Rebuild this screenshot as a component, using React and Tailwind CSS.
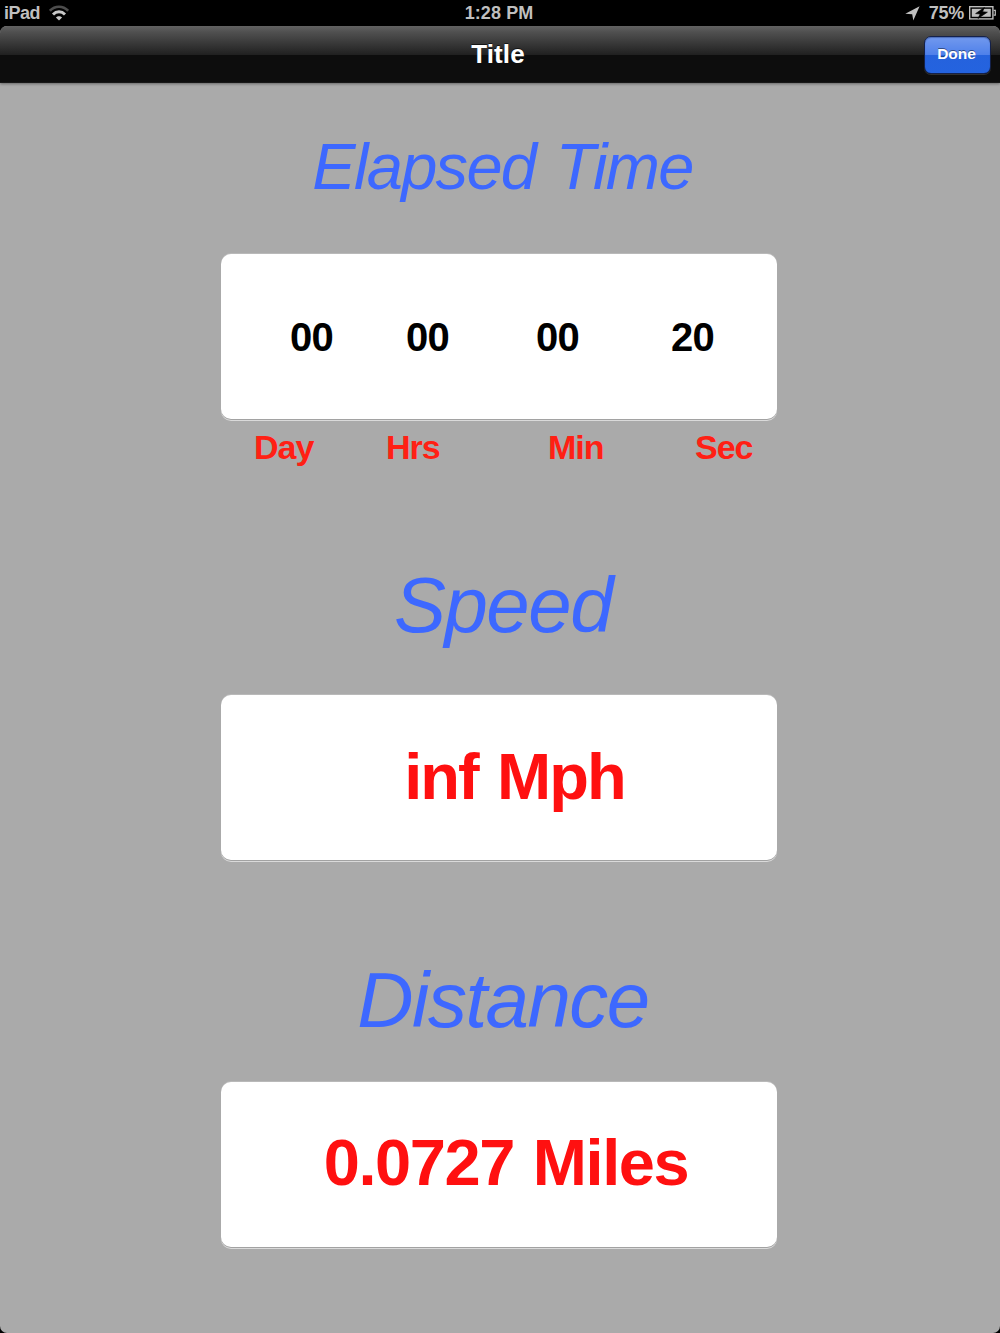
const elapsed = ['00', '00', '00', '20'];
const units = ['Day', 'Hrs', 'Min', 'Sec'];

function WifiIcon() {
  return (
    <svg width="20" height="16" viewBox="0 0 20 16" fill="none">
      <path d="M0.9 5.8C6 0.3 14 0.3 19.1 5.8" stroke="#4c4c4c" strokeWidth="2.6" />
      <path d="M4 9.4C7.4 5.8 12.6 5.8 16 9.4" stroke="#c8c8c8" strokeWidth="2.9" />
      <path d="M10 15.4L6.9 12.6C8.6 10.8 11.4 10.8 13.1 12.6Z" fill="#c8c8c8" />
    </svg>
  );
}

function LocationIcon() {
  return (
    <svg width="15" height="15" viewBox="0 0 15 15">
      <path d="M14.6 0.2L8.3 14.6L7.2 8.2L0.3 7.8Z" fill="#c0c0c0" />
    </svg>
  );
}

function BatteryIcon() {
  return (
    <svg width="28" height="14" viewBox="0 0 28 14">
      <rect x="0.7" y="0.7" width="23.2" height="12.2" fill="none" stroke="#bdbdbd" strokeWidth="1.4" />
      <rect x="2.8" y="2.8" width="19" height="8" fill="#bdbdbd" />
      <path d="M24.6 4.4H26.3V9.2H24.6" fill="none" stroke="#bdbdbd" strokeWidth="1.2" />
      <path d="M15.4 1.6L6.6 7.6L11.2 8L9 12.4L18.4 6.2L13.6 5.7Z" fill="#000" stroke="#000" strokeWidth="0.6" />
    </svg>
  );
}

function StatusBar() {
  return (
    <div className="grid h-[26px] grid-cols-3 items-center text-[18px] font-bold leading-none text-[#bfbfbf]">
      <div className="flex items-center gap-[9px] pl-1">
        <span className="tracking-[-0.5px]">iPad</span>
        <WifiIcon />
      </div>
      <span className="pr-[2px] text-center tracking-[0.1px]">1:28 PM</span>
      <div className="flex items-center justify-end pr-[3px]">
        <LocationIcon />
        <span className="ml-[9px] mr-[5px] tracking-[-0.3px]">75%</span>
        <BatteryIcon />
      </div>
    </div>
  );
}

function NavBar() {
  return (
    <header className="relative z-10 grid h-[57px] grid-cols-3 items-center rounded-t-[7px] bg-[linear-gradient(#626262_0px,#505050_6px,#202020_29px,#0d0d0d_29px,#0d0d0d_56px,#222_57px)] shadow-[0_1px_3px_rgba(0,0,0,0.4)]">
      <span />
      <h1 className="pr-[4px] pb-[2px] text-center text-[26px] font-bold leading-none tracking-[0.1px] text-white [text-shadow:0_-1px_0_rgba(0,0,0,0.6)]">
        Title
      </h1>
      <div className="flex justify-end pr-[9px]">
        <button className="h-[38px] w-[67px] rounded-[7px] border border-[#14214a] bg-[linear-gradient(#7299ee_0px,#4e80ea_18px,#2562dd_18px,#2463df_36px)] pr-[2px] pb-[1px] text-[15.5px] font-bold leading-none text-white shadow-[0_1px_0_rgba(255,255,255,0.15),inset_0_1px_1px_rgba(20,40,100,0.4)] [text-shadow:0_-1px_0_rgba(0,0,0,0.45)]">
          Done
        </button>
      </div>
    </header>
  );
}

function Card({ children }) {
  return (
    <div className="h-[165px] w-[556px] rounded-[10px] bg-white shadow-[0_1px_0_#a2a2a2,0_2px_0_#dadada,0_-1px_0_#b9b9b9]">
      {children}
    </div>
  );
}

export default function App() {
  return (
    <div className="flex h-[1333px] w-[1000px] flex-col overflow-hidden bg-black font-['Liberation_Sans',Arial,sans-serif]">
      <StatusBar />
      <div className="flex flex-1 flex-col rounded-t-[7px] rounded-b-[7px] bg-[#aaa]">
        <NavBar />
        <main className="flex flex-col pl-[221px]">
          <section className="h-[441px] pt-[44px]">
            <h2 className="mb-[47px] h-20 w-[556px] pl-[7px] text-center text-[65px] italic leading-[80px] tracking-[-1.7px] [word-spacing:4px] text-[#3d68ff]">
              Elapsed Time
            </h2>
            <Card>
              <div className="grid h-full grid-cols-[116px_130px_135px_auto] items-center pl-[69px] text-[40px] font-bold tracking-[-0.8px] text-black">
                {elapsed.map((value, i) => (
                  <span key={units[i]}>{value}</span>
                ))}
              </div>
            </Card>
            <div className="mt-[8px] grid grid-cols-[132px_162px_147px_auto] pl-[33px] text-[34px] font-bold leading-[40px] tracking-[-1px] text-[#ff2014]">
              {units.map((unit) => (
                <span key={unit}>{unit}</span>
              ))}
            </div>
          </section>

          <section className="h-[387px] pt-[36px]">
            <h2 className="mb-[45px] h-[90px] w-[556px] pl-2 text-center text-[78px] italic leading-[90px] tracking-[-1.5px] text-[#3d68ff]">
              Speed
            </h2>
            <Card>
              <p className="pl-[31px] text-center text-[65px] font-bold leading-[163px] tracking-[-1.9px] [word-spacing:3px] text-[#ff1010]">inf Mph</p>
            </Card>
          </section>

          <section className="pt-[44px]">
            <h2 className="mb-[37px] h-[90px] w-[556px] pl-2 text-center text-[78px] italic leading-[90px] tracking-[-1.5px] text-[#3d68ff]">
              Distance
            </h2>
            <Card>
              <p className="pl-[14px] text-center text-[65px] font-bold leading-[161px] tracking-[-1.4px] [word-spacing:2px] text-[#ff1010]">0.0727 Miles</p>
            </Card>
          </section>
        </main>
      </div>
    </div>
  );
}
